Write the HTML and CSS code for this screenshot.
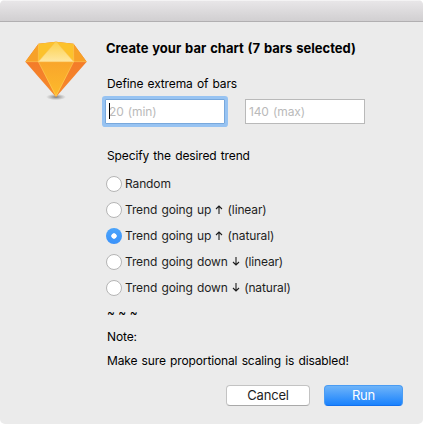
FILE: index.html
```
<!DOCTYPE html>
<html lang="en">
<head>
<meta charset="utf-8">
<title>Create your bar chart</title>
<link rel="stylesheet" href="styles.css">
</head>
<body>
<main class="window">
  <header class="titlebar"></header>
  <div class="content">
    <svg class="logo" viewBox="0 0 70 70" width="70" height="70">
      <defs>
        <linearGradient id="body" x1="0" y1="0" x2="0" y2="1"><stop offset="0" stop-color="#f9a52b"/><stop offset="1" stop-color="#fcbb2c"/></linearGradient>
        <linearGradient id="side" x1="0" y1="0" x2="0" y2="1"><stop offset="0" stop-color="#f27328"/><stop offset="1" stop-color="#f68a2b"/></linearGradient>
        <linearGradient id="table" x1="0" y1="0" x2="0" y2="1"><stop offset="0" stop-color="#fcd049"/><stop offset="1" stop-color="#fee7a2"/></linearGradient>
        <radialGradient id="shade"><stop offset="0" stop-color="#555" stop-opacity=".75"/><stop offset="1" stop-color="#777" stop-opacity="0"/></radialGradient>
      </defs>
      <ellipse cx="36" cy="62" rx="10" ry="3.2" fill="url(#shade)"/>
      <path d="M5.3 26.7 18.5 8.7 36 6.8 53.5 8.7 66.7 26.7 36 62Z" fill="url(#side)"/>
      <path d="M18.3 26.7H53.7L36 62Z" fill="url(#body)"/>
      <path d="M5.3 26.7 18.5 8.7 18.3 26.7ZM66.7 26.7 53.5 8.7 53.7 26.7Z" fill="#f7a128"/>
      <path d="M18.5 8.7 36 6.8 18.3 26.7ZM53.5 8.7 36 6.8 53.7 26.7Z" fill="#fcc22c"/>
      <path d="M36 6.8 18.3 26.7H53.7Z" fill="url(#table)"/>
      <path d="M5.3 26.7H66.7M18.5 8.7 18.3 26.7 36 61 53.7 26.7 53.5 8.7M18.3 26.7 36 6.8 53.7 26.7" fill="none" stroke="#ffe070" stroke-width=".7" stroke-opacity=".6"/>
    </svg>
    <form class="form">
      <h1 class="title">Create your bar chart (7 bars selected)</h1>
      <p class="label extrema">Define extrema of bars</p>
      <div class="fields">
        <div class="field focused"><span class="caret"></span><span class="hint">20 (min)</span></div>
        <div class="field"><span class="hint">140 (max)</span></div>
      </div>
      <p class="label trend">Specify the desired trend</p>
      <div class="options">
        <label class="option"><span class="radio"></span><span>Random</span></label>
        <label class="option"><span class="radio"></span><span>Trend going up <svg class="arrow" viewBox="0 0 8 9"><path d="M4 9V1M1 4 4 1 7 4"/></svg> (linear)</span></label>
        <label class="option"><span class="radio checked"></span><span>Trend going up <svg class="arrow" viewBox="0 0 8 9"><path d="M4 9V1M1 4 4 1 7 4"/></svg> (natural)</span></label>
        <label class="option"><span class="radio"></span><span>Trend going down <svg class="arrow" viewBox="0 0 8 9"><path d="M4 0V8M1 5 4 8 7 5"/></svg> (linear)</span></label>
        <label class="option"><span class="radio"></span><span>Trend going down <svg class="arrow" viewBox="0 0 8 9"><path d="M4 0V8M1 5 4 8 7 5"/></svg> (natural)</span></label>
      </div>
      <p class="note tildes">~ ~ ~</p>
      <p class="note">Note:</p>
      <p class="note">Make sure proportional scaling is disabled!</p>
    </form>
  </div>
  <footer class="actions">
    <div class="button cancel">Cancel</div>
    <div class="button run">Run</div>
  </footer>
</main>
</body>
</html>
```
FILE: styles.css
```
* { box-sizing: border-box; }
body { margin: 0; background: #fff; font: 12px/16px Inter, "Liberation Sans", sans-serif; letter-spacing: -.13px; word-spacing: 1px; color: #000; }
.window { width: 423px; height: 424px; background: #ebebeb; border-radius: 5px; overflow: hidden; display: flex; flex-direction: column; }
.titlebar { height: 22px; flex: none; background: linear-gradient(#e8e6e8, #d1cfd1); border-top: 1px solid #f4f3f4; border-bottom: 1px solid #b1afb1; }
.content { display: flex; height: 363px; flex: none; }
.logo { margin: 13px 0 0 20px; flex: none; }
.form { margin-left: 17px; padding-top: 18px; white-space: nowrap; }
h1, p { margin: 0; }
.title { font-size: 13px; line-height: 16px; font-weight: 700; margin-left: -1px; letter-spacing: 0; word-spacing: .8px; }
.extrema { margin-top: 20px; }
.fields { display: flex; gap: 20px; margin: 7px 0 0 -2px; }
.field { width: 120px; height: 25px; background: #fff; border: 1px solid #b9b9b9; padding-left: 3px; display: flex; align-items: center; color: #bababa; position: relative; }
.focused { border-color: #78a8dc; box-shadow: 0 0 0 3px #97c3f2; border-radius: 1px; }
.caret { position: absolute; left: 3px; top: 3px; width: 1px; height: 16px; background: #000; }
.trend { margin-top: 24px; }
.options { margin: 7px 0 0 -1px; }
.option { display: flex; align-items: center; gap: 3px; height: 26px; color: #1e1e1e; }
.radio { width: 16px; height: 16px; border-radius: 50%; background: #fff; border: 1px solid #b5b5b5; flex: none; }
.checked { background: radial-gradient(circle, #fff 2.4px, transparent 3px), linear-gradient(#4ba4fb, #3a92fa); border: 0; }
.arrow { width: 8px; height: 9px; fill: none; stroke: #1e1e1e; stroke-width: 1.1; }
.note { height: 24px; line-height: 24px; }
.tildes { word-spacing: 0; letter-spacing: 0; }
.actions { display: flex; justify-content: flex-end; gap: 14px; padding-right: 20px; }
.button { height: 21px; border-radius: 4px; text-align: center; font-size: 13px; line-height: 19px; letter-spacing: -.2px; }
.cancel { width: 84px; background: #fff; border: 1px solid #c3c3c3; border-bottom-color: #a9a9a9; color: #1e1e1e; }
.run { width: 79px; color: #fff; background: linear-gradient(#6eb4f9, #1a82fd); border: 1px solid #4a9cf3; border-bottom-color: #1170ee; }
```
